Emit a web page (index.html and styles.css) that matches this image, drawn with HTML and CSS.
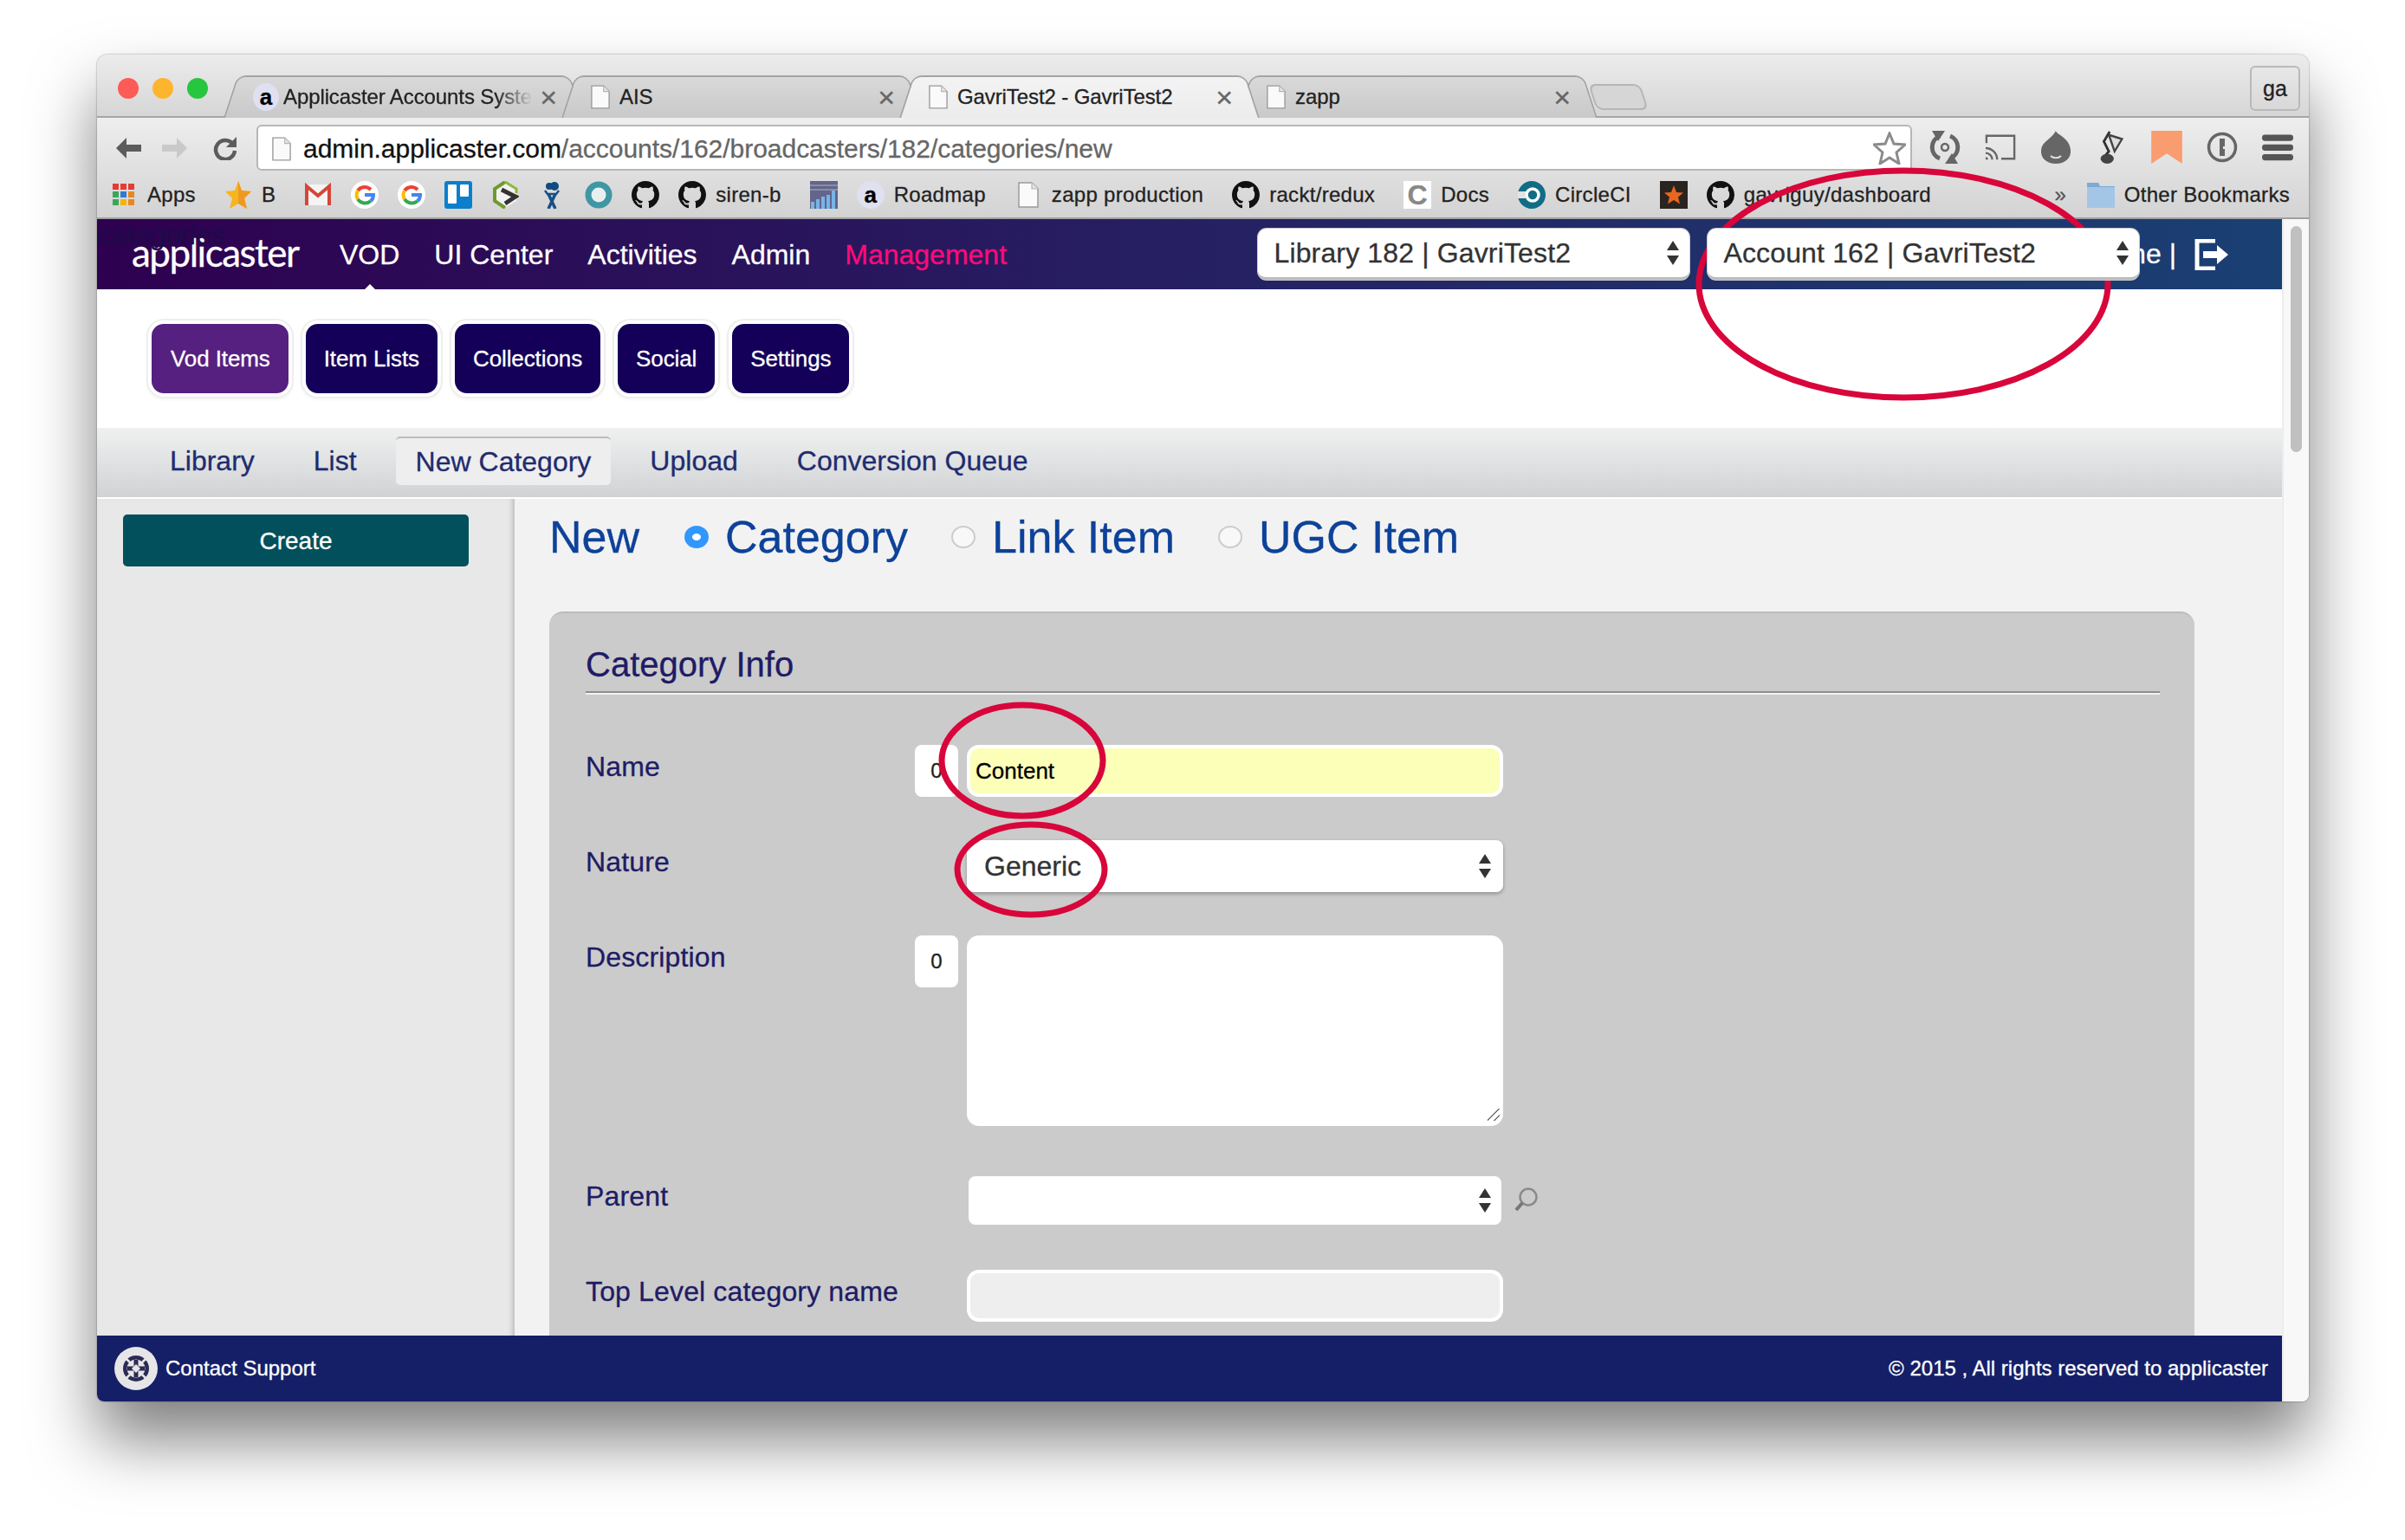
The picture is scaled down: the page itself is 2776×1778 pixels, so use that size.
FILE: index.html
```html
<!DOCTYPE html>
<html lang="en">
<head>
  <meta charset="UTF-8">
  <title>Applicaster Accounts System</title>
  <link rel="stylesheet" href="styles.css">
</head>
<body>
  <svg class="defs" width="0" height="0">
    <symbol id="gh" viewBox="0 0 16 16"><path d="M8 0C3.58 0 0 3.58 0 8c0 3.54 2.29 6.53 5.47 7.59.4.07.55-.17.55-.38 0-.19-.01-.82-.01-1.49-2.01.37-2.53-.49-2.69-.94-.09-.23-.48-.94-.82-1.13-.28-.15-.68-.52-.01-.53.63-.01 1.08.58 1.23.82.72 1.21 1.87.87 2.33.66.07-.52.28-.87.51-1.07-1.78-.2-3.64-.89-3.64-3.95 0-.87.31-1.59.82-2.15-.08-.2-.36-1.02.08-2.12 0 0 .67-.21 2.2.82.64-.18 1.32-.27 2-.27.68 0 1.36.09 2 .27 1.53-1.04 2.2-.82 2.2-.82.44 1.1.16 1.92.08 2.12.51.56.82 1.27.82 2.15 0 3.07-1.87 3.75-3.65 3.95.29.25.54.73.54 1.48 0 1.07-.01 1.93-.01 2.2 0 .21.15.46.55.38A8.013 8.013 0 0016 8c0-4.42-3.58-8-8-8z" fill="#111"/></symbol>
    <symbol id="doc" viewBox="0 0 24 30"><path d="M1 1h15l7 7v21H1z" fill="#fafafa" stroke="#9a9a9a" stroke-width="1.5"/><path d="M16 1v7h7" fill="#e4e4e4" stroke="#b5b5b5" stroke-width="1.2"/></symbol>
    <symbol id="goog" viewBox="0 0 32 32"><circle cx="16" cy="16" r="16" fill="#fff"/><path d="M23 10a10 10 0 0 0-15 1" fill="none" stroke="#ea4335" stroke-width="4"/><path d="M8 11a10 10 0 0 0 0 10" fill="none" stroke="#fbbc05" stroke-width="4"/><path d="M8 21a10 10 0 0 0 15 2" fill="none" stroke="#34a853" stroke-width="4"/><path d="M23 23a9 9 0 0 0 3-7H16" fill="none" stroke="#4285f4" stroke-width="4"/></symbol>
  </svg>

  <div class="window">
    <div class="tabstrip">
      <div class="lights"><i class="light red"></i><i class="light amber"></i><i class="light green"></i></div>
      <div class="tabs">
        <div class="tab"><span class="afav">a</span><span class="tab-title fade">Applicaster Accounts System</span><span class="tab-x">×</span></div>
        <div class="tab"><svg class="tab-doc"><use href="#doc"/></svg><span class="tab-title">AIS</span><span class="tab-x">×</span></div>
        <div class="tab active"><svg class="tab-doc"><use href="#doc"/></svg><span class="tab-title">GavriTest2 - GavriTest2</span><span class="tab-x">×</span></div>
        <div class="tab"><svg class="tab-doc"><use href="#doc"/></svg><span class="tab-title">zapp</span><span class="tab-x">×</span></div>
        <div class="newtab"></div>
      </div>
      <div class="profile">ga</div>
    </div>

    <div class="bars">
      <div class="toolbar">
        <svg class="nav-ico" viewBox="0 0 32 28"><path d="M14 2 2 14l12 12v-8h17v-8H14z" fill="#5c5c5c"/></svg>
        <svg class="nav-ico fwd" viewBox="0 0 32 28"><path d="M18 2l12 12-12 12v-8H1v-8h17z" fill="#c9c9c9"/></svg>
        <svg class="nav-ico rel" viewBox="0 0 28 28"><path d="M23 9.500A11 11 0 1 0 25 17" fill="none" stroke="#5c5c5c" stroke-width="4.500"/><path d="M27 1v12H15z" fill="#5c5c5c"/></svg>
        <div class="omnibox">
          <svg class="omni-doc"><use href="#doc"/></svg>
          <span class="url"><b>admin.applicaster.com</b>/accounts/162/broadcasters/182/categories/new</span>
          <svg class="omni-star" viewBox="0 0 38 38"><path d="M19 2l5 12 13 1-10 9 3 13-11-7-11 7 3-13L1 15l13-1z" fill="#fff" stroke="#8b8b8b" stroke-width="3"/></svg>
        </div>
        <div class="ext-icons">
          <svg viewBox="0 0 36 38"><path d="M12 6A14 14 0 0 0 12 32" fill="none" stroke="#666" stroke-width="5"/><path d="M24 32A14 14 0 0 0 24 6" fill="none" stroke="#666" stroke-width="5"/><circle cx="18" cy="19" r="4" fill="none" stroke="#666" stroke-width="2.500"/><path d="M3 0h15L10 12zM33 38H18l8-12z" fill="#666"/></svg>
          <svg viewBox="0 0 38 34"><path d="M2 12V3h34v28H20" fill="none" stroke="#666" stroke-width="2.500"/><path d="M1 18a14 14 0 0 1 14 14M1 24a8 8 0 0 1 8 8" fill="none" stroke="#666" stroke-width="2.500"/><path d="M1 29a3 3 0 0 1 3 3H1z" fill="#666"/></svg>
          <svg viewBox="0 0 36 38"><path d="M18 0c0 4 16 8 17 22 1 10-7 16-17 16S0 32 1 22C2 12 14 9 18 0z" fill="#666"/><path d="M12 29c3 3 9 3 12 0" fill="none" stroke="#e0e0e0" stroke-width="2"/></svg>
          <svg viewBox="0 0 30 40"><path d="M12 5l16 5-9 15z" fill="#ddd" stroke="#444" stroke-width="2.500"/><path d="M13 1 6 13l6 12-4 5" fill="none" stroke="#333" stroke-width="3"/><ellipse cx="10" cy="34" rx="8" ry="6" fill="#444"/></svg>
          <svg viewBox="0 0 30 32"><path d="M0 0h30v32L15 22 0 32z" fill="#f99c70"/></svg>
          <svg viewBox="0 0 36 36"><circle cx="18" cy="18" r="15.500" fill="none" stroke="#666" stroke-width="3.500"/><path d="M15 8h6v9h-2v3h2v8h-6z" fill="#666"/></svg>
          <svg viewBox="0 0 32 28"><rect y="1" width="32" height="6.500" rx="3" fill="#555"/><rect y="11" width="32" height="6.500" rx="3" fill="#555"/><rect y="21" width="32" height="6.500" rx="3" fill="#555"/></svg>
        </div>
      </div>

      <div class="bookmarks">
        <div class="bm"><span class="ico apps"><i class="r"></i><i class="r"></i><i class="r"></i><i class="g"></i><i class="b"></i><i class="o"></i><i class="g"></i><i class="y"></i><i class="o"></i></span><span class="bm-text">Apps</span></div>
        <div class="bm"><svg class="ico" viewBox="0 0 32 32"><path d="M16 0l4 11 11 1-8 8 3 12-10-6-10 6 3-12-8-8 11-1z" fill="#f7b51d"/><path d="M16 0l4 11 11 1-8 8 3 12-10-6z" fill="#ee9a20"/></svg><span class="bm-text">B</span></div>
        <svg class="ico" viewBox="0 0 32 32"><rect x="1" y="4" width="30" height="24" fill="#f4f4f4"/><path d="M3 28V6l13 11L29 6v22" fill="none" stroke="#d44638" stroke-width="4"/></svg>
        <svg class="ico"><use href="#goog"/></svg>
        <svg class="ico"><use href="#goog"/></svg>
        <svg class="ico" viewBox="0 0 32 32"><rect width="32" height="32" rx="3" fill="#0b7fcb"/><rect x="4" y="4" width="10" height="22" rx="1" fill="#fff"/><rect x="18" y="4" width="10" height="14" rx="1" fill="#fff"/></svg>
        <svg class="ico" viewBox="0 0 32 32"><path d="M16 1 29 9v14L16 31 4 23V9z" fill="#f2f2f2"/><path d="M16 1 4 9v14l12 8" fill="none" stroke="#6f9a2d" stroke-width="4"/><path d="M16 1l13 8v5" fill="none" stroke="#8ab83a" stroke-width="3"/><path d="M12 10l16 8-12 8" fill="none" stroke="#333" stroke-width="5"/></svg>
        <svg class="ico" viewBox="0 0 32 32"><circle cx="13" cy="6" r="4" fill="#0f4c81"/><circle cx="19" cy="6" r="5" fill="#0f4c81"/><path d="M8 11l3 4h10l3-4" fill="none" stroke="#174f86" stroke-width="2.500"/><path d="M12 15l8 17M20 15l-8 17" stroke="#174f86" stroke-width="3.500"/></svg>
        <svg class="ico" viewBox="0 0 32 32"><circle cx="16" cy="16" r="12" fill="#e8eff0" stroke="#3f97a3" stroke-width="7"/></svg>
        <svg class="ico"><use href="#gh"/></svg>
        <div class="bm"><svg class="ico"><use href="#gh"/></svg><span class="bm-text">siren-b</span></div>
        <svg class="ico" viewBox="0 0 32 32"><rect width="32" height="32" fill="#63658a"/><path d="M0 5h32M0 10h32" stroke="#8b8ca6" stroke-width="2"/><path d="M3 32v-8M9 32v-11M15 32v-14M21 32v-16M27 32V11" stroke="#76b5e8" stroke-width="4"/></svg>
        <div class="bm"><span class="afav">a</span><span class="bm-text">Roadmap</span></div>
        <div class="bm"><svg class="ico bm-doc"><use href="#doc"/></svg><span class="bm-text">zapp production</span></div>
        <div class="bm"><svg class="ico"><use href="#gh"/></svg><span class="bm-text">rackt/redux</span></div>
        <div class="bm"><span class="ico cdocs">C</span><span class="bm-text">Docs</span></div>
        <div class="bm"><svg class="ico" viewBox="0 0 32 32"><circle cx="16" cy="16" r="16" fill="#116d86"/><circle cx="17" cy="16" r="7" fill="none" stroke="#fff" stroke-width="3.500"/><path d="M0 12h9v8H0z" fill="#e3e3e3"/><circle cx="17" cy="16" r="2.500" fill="#116d86"/></svg><span class="bm-text">CircleCI</span></div>
        <svg class="ico" viewBox="0 0 32 32"><rect width="32" height="32" fill="#2a2420"/><path d="M16 5l3 8 8 .5-6 5 2 8-7-4.500L9 26.500l2-8-6-5 8-.5z" fill="#e8671f"/></svg>
        <div class="bm"><svg class="ico"><use href="#gh"/></svg><span class="bm-text">gavriguy/dashboard</span></div>
        <span class="chevrons">»</span>
        <div class="bm other"><svg class="ico" viewBox="0 0 32 32"><path d="M0 6V2h13l2 4h17v25H0z" fill="#7da9d2"/><path d="M0 7h32v24H0z" fill="#a4c6e6"/></svg><span class="bm-text">Other Bookmarks</span></div>
      </div>
    </div>

    <div class="viewport">
      <div class="page">
        <header class="appbar">
          <span class="ghost-title">categories</span>
          <span class="logo">applicaster</span>
          <nav class="appnav">
            <a class="current">VOD</a>
            <a>UI Center</a>
            <a>Activities</a>
            <a>Admin</a>
            <a class="pink">Management</a>
          </nav>
          <div class="appbar-right">
            <div class="topselect"><span>Library 182 | GavriTest2</span><span class="updown"></span></div>
            <div class="topselect"><span>Account 162 | GavriTest2</span><span class="updown"></span></div>
            <span class="home">Home |</span>
            <svg class="logout" viewBox="0 0 40 36"><path d="M24 2H3v32h21" fill="none" stroke="#fff" stroke-width="5"/><path d="M10 14h16V7l13 11-13 11v-7H10z" fill="#fff"/></svg>
          </div>
        </header>

        <div class="sections">
          <a class="section on">Vod Items</a>
          <a class="section">Item Lists</a>
          <a class="section">Collections</a>
          <a class="section">Social</a>
          <a class="section">Settings</a>
        </div>

        <div class="subnav">
          <a>Library</a>
          <a>List</a>
          <a class="on">New Category</a>
          <a>Upload</a>
          <a>Conversion Queue</a>
        </div>

        <div class="main">
          <aside class="sidebar"><button class="create">Create</button></aside>
          <section class="content">
            <div class="kinds">
              <span class="kind-new">New</span>
              <span class="kind"><i class="radio checked"></i>Category</span>
              <span class="kind"><i class="radio"></i>Link Item</span>
              <span class="kind"><i class="radio"></i>UGC Item</span>
            </div>
            <div class="panel">
              <h2 class="panel-title">Category Info</h2>
              <div class="row row-name">
                <label>Name</label>
                <span class="counter">0</span>
                <input class="field field-filled" value="Content">
              </div>
              <div class="row row-nature">
                <label>Nature</label>
                <div class="select shadowed"><span>Generic</span><span class="updown"></span></div>
              </div>
              <div class="row row-desc">
                <label>Description</label>
                <span class="counter">0</span>
                <textarea class="field area"></textarea>
              </div>
              <div class="row row-parent">
                <label>Parent</label>
                <div class="select narrow"><span></span><span class="updown"></span></div>
                <svg class="search" viewBox="0 0 28 30"><circle cx="16" cy="12" r="9.500" fill="none" stroke="#8a8a8a" stroke-width="2.500"/><path d="M9 19l-7 8" stroke="#777" stroke-width="4"/></svg>
              </div>
              <div class="row">
                <label>Top Level category name</label>
                <input class="field locked" disabled>
              </div>
            </div>
          </section>
        </div>

        <footer class="footer">
          <div class="support">
            <svg class="support-ico" viewBox="0 0 50 50"><ellipse cx="25" cy="25" rx="25" ry="25" fill="#e6e6e6"/><circle cx="25" cy="25" r="15" fill="#2b2b55"/><circle cx="25" cy="25" r="10.500" fill="#e6e6e6"/><path d="M25 15v20M15 25h20" stroke="#2b2b55" stroke-width="5"/><path d="M14 14l7 7M36 14l-7 7M14 36l7-7M36 36l-7-7" stroke="#e6e6e6" stroke-width="2.500"/><path d="M25 20l5 5-5 5-5-5z" fill="#e6e6e6"/></svg>
            Contact Support
          </div>
          <span>© 2015 , All rights reserved to applicaster</span>
        </footer>
      </div>
      <div class="scrollbar"><i class="thumb"></i></div>
    </div>
  </div>

  <svg class="marks" viewBox="0 0 2776 1778">
    <ellipse cx="2197" cy="328" rx="236" ry="131"/>
    <ellipse cx="1180" cy="878" rx="93" ry="64"/>
    <ellipse cx="1190" cy="1004" rx="85" ry="52"/>
  </svg>
</body>
</html>
```

FILE: styles.css
```css
* { box-sizing: border-box; }

html, body { margin: 0; }

body {
  position: relative;
  width: 2776px;
  height: 1778px;
  padding: 63px 0 0 112px;
  background: #fff;
  font-family: "Liberation Sans", Arial, sans-serif;
  -webkit-text-stroke: .3px;
  overflow: hidden;
}

.defs { position: absolute; }

.window {
  display: flex;
  flex-direction: column;
  width: 2553px;
  height: 1555px;
  border-radius: 12px 12px 8px 8px;
  overflow: hidden;
  background: #f8f8f8;
  box-shadow: 0 44px 74px rgba(0, 0, 0, .5), 0 0 2px rgba(0, 0, 0, .5);
}

/* browser tabs */
.tabstrip {
  display: flex;
  align-items: flex-end;
  height: 73px;
  background: linear-gradient(#ececec, #d6d6d6);
  border-bottom: 2px solid #a6a6a6;
}

.lights {
  display: flex;
  gap: 16px;
  align-self: flex-start;
  margin: 27px 18px 0 24px;
}

.light { width: 24px; height: 24px; border-radius: 50%; }
.red { background: #fc5b57; }
.amber { background: #fdb52d; }
.green { background: #27c63f; }

.tabs { display: flex; align-items: flex-end; height: 49px; margin-bottom: -2px; }

.tab {
  position: relative;
  display: flex;
  align-items: center;
  width: 415px;
  height: 49px;
  margin-right: -25px;
  padding: 0 30px 0 34px;
  font-size: 24px;
  letter-spacing: -.1px;
  color: #222;
  z-index: 1;
}

.tab::before, .tab::after {
  content: "";
  position: absolute;
  top: 0;
  bottom: 0;
  width: 50%;
  background: linear-gradient(#d9d9d9, #c9c9c9);
  border: 2px solid #a4a4a4;
  border-bottom: 0;
  z-index: -1;
}

.tab::before {
  left: 0;
  border-right: 0;
  border-radius: 10px 0 0 0;
  transform-origin: bottom left;
  transform: skewX(-18deg);
}

.tab::after {
  right: 0;
  border-left: 0;
  border-radius: 0 10px 0 0;
  transform-origin: bottom right;
  transform: skewX(18deg);
}

.tab.active { z-index: 2; }
.tab.active::before, .tab.active::after { background: linear-gradient(#f3f3f3, #ececec); }

.tab-doc { width: 22px; height: 28px; margin-right: 11px; flex: none; }

.tab-title { flex: 1; white-space: nowrap; overflow: hidden; }

.fade {
  -webkit-mask-image: linear-gradient(to right, #000 85%, transparent);
  mask-image: linear-gradient(to right, #000 85%, transparent);
}

.tab-x { font-size: 34px; line-height: 1; color: #666; margin-left: 8px; }

.afav {
  display: inline-flex;
  align-items: center;
  justify-content: center;
  flex: none;
  width: 30px;
  height: 32px;
  margin-right: 5px;
  border-radius: 50%;
  background: #dfe0f0;
  color: #000;
  font-weight: bold;
  font-size: 26px;
  line-height: 1;
}

.newtab {
  width: 60px;
  height: 30px;
  margin: 0 0 9px 20px;
  border: 2px solid #b5b5b5;
  border-radius: 8px;
  background: #d6d6d6;
  transform: skewX(18deg);
}

.profile {
  display: flex;
  align-items: center;
  justify-content: center;
  align-self: flex-start;
  width: 58px;
  height: 52px;
  margin: 13px 10px 0 auto;
  border: 2px solid #b9b9b9;
  border-radius: 6px;
  font-size: 25px;
  color: #222;
}

/* toolbar and bookmarks */
.bars { background: linear-gradient(#eeeeee, #d3d3d3); border-bottom: 2px solid #a0a0a0; }

.toolbar { display: flex; align-items: flex-end; height: 61px; padding-left: 20px; }

.nav-ico { width: 32px; height: 28px; margin: 0 22px 12px 0; flex: none; }
.nav-ico.fwd { margin-right: 28px; }
.nav-ico.rel { width: 28px; margin-right: 22px; }

.omnibox {
  display: flex;
  align-items: center;
  width: 1911px;
  height: 53px;
  padding: 3px 5px 0 16px;
  background: #fff;
  border: 2px solid #b7b7b7;
  border-radius: 6px 6px 0 6px;
}

.omni-doc { width: 22px; height: 28px; margin-right: 14px; flex: none; }

.url { flex: 1; font-size: 30px; letter-spacing: -.03px; color: #666; white-space: nowrap; }
.url b { font-weight: normal; color: #111; }

.omni-star { width: 38px; height: 38px; flex: none; margin-top: -3px; }

.ext-icons { display: flex; gap: 28px; align-self: flex-start; margin: 15px 0 0 20px; }
.ext-icons svg { width: 36px; height: 38px; }

.bookmarks {
  display: flex;
  align-items: center;
  gap: 22px;
  height: 54px;
  padding: 2px 0 0 15px;
}

.ico { width: 32px; height: 32px; flex: none; }

.bm { display: flex; align-items: center; gap: 11px; }
.bm .afav { margin: 0; width: 32px; }
.bm-doc { padding: 0 4px; }

.bm-text { font-size: 24px; color: #222; margin-right: 11px; white-space: nowrap; letter-spacing: .3px; }

.apps {
  display: grid;
  grid-template-columns: repeat(3, 7px);
  grid-auto-rows: 7px;
  gap: 2px;
  padding: 3px 0 0 3px;
}

.apps i.r { background: #e53b30; }
.apps i.g { background: #3aa757; }
.apps i.b { background: #3478d0; }
.apps i.o { background: #e8891c; }
.apps i.y { background: #f4b400; }

.cdocs {
  display: flex;
  align-items: center;
  justify-content: center;
  background: #fff;
  color: #888;
  font-weight: bold;
  font-size: 32px;
}

.chevrons { margin-left: auto; font-size: 24px; color: #555; }

.other { margin: 0 22px 0 2px; }
.other .bm-text { margin-right: 0; }

/* page */
.viewport { display: flex; flex: 1; min-height: 0; }

.page { display: flex; flex-direction: column; width: 2522px; }

.appbar {
  position: relative;
  display: flex;
  align-items: center;
  flex: none;
  height: 81px;
  padding: 0 61px 0 40px;
  background: linear-gradient(to right, #2e0050, #262063 50%, #1a4073);
  color: #fff;
}

.ghost-title { position: absolute; left: 0; top: 0; font-size: 32px; color: #1f0a4a; }

.logo { width: 240px; font-family: Lato, sans-serif; font-size: 44px; letter-spacing: -1.500px; margin-bottom: 6px; }

.appnav { display: flex; gap: 40px; padding-top: 2px; font-size: 32px; }

.appnav .current { position: relative; }

.appnav .current::after {
  content: "";
  position: absolute;
  left: 50%;
  bottom: -22px;
  margin-left: -7px;
  border: 7px solid transparent;
  border-top: 0;
  border-bottom-color: #fff;
}

.appnav .pink { color: #ff0a78; }

.appbar-right { display: flex; align-items: center; margin-left: auto; }

.topselect {
  position: relative;
  z-index: 1;
  display: flex;
  align-items: center;
  justify-content: space-between;
  width: 498px;
  height: 59px;
  margin-right: 21px;
  padding: 0 12px 0 18px;
  background: #fff;
  border-bottom: 3px solid #bbb;
  border-radius: 10px;
  box-shadow: 0 0 0 1px #ccc;
  font-size: 32px;
  letter-spacing: .15px;
  color: #333;
}

.updown { position: relative; width: 14px; height: 28px; flex: none; }

.updown::before, .updown::after {
  content: "";
  position: absolute;
  left: 0;
  border: 7px solid transparent;
}

.updown::before { top: 0; border-top: 0; border-bottom: 11px solid #333; }
.updown::after { bottom: 0; border-bottom: 0; border-top: 11px solid #333; }

.home { margin: 0 21px 0 -81px; font-size: 32px; white-space: nowrap; }

.logout { width: 40px; height: 36px; flex: none; }

.sections { display: flex; flex: none; gap: 20px; height: 160px; padding: 40px 0 0 63px; background: #fff; }

.section {
  display: flex;
  align-items: center;
  height: 80px;
  padding: 0 21px;
  background: #140058;
  border-radius: 14px;
  box-shadow: 0 0 0 4px #fff, 0 0 0 6px #eee, 0 2px 4px 5px rgba(0, 0, 0, .06);
  color: #fff;
  font-size: 26px;
  letter-spacing: -.1px;
}

.section.on { background: #55207f; padding: 0 21px 0 22px; }

.subnav {
  display: flex;
  align-items: flex-end;
  gap: 22px;
  flex: none;
  height: 82px;
  padding: 0 0 14px 61px;
  border-bottom: 2px solid #fff;
  background: linear-gradient(#eff1f1, #d0d2d4);
  font-size: 32px;
  color: #1f2c6e;
}

.subnav a { display: flex; align-items: center; height: 56px; padding: 0 23px; }
.subnav a.on { background: #eee; border-top: 2px solid #bbb; border-radius: 5px; }

.main { display: flex; flex: 1; min-height: 0; overflow: hidden; }

.sidebar {
  width: 482px;
  flex: none;
  padding: 18px 0 0 30px;
  background: #e8e8e8;
  box-shadow: inset -6px 0 6px -4px rgba(0, 0, 0, .22);
}

.create {
  display: block;
  width: 399px;
  height: 60px;
  padding: 2px 0 0;
  border: 0;
  border-radius: 5px;
  background: #02505b;
  color: #fff;
  font: 28px "Liberation Sans", Arial, sans-serif;
  -webkit-text-stroke: .3px;
}

.content { flex: 1; padding: 0 101px 0 40px; background: #f2f2f2; }

.kinds {
  display: flex;
  align-items: center;
  height: 88px;
  margin-bottom: 42px;
  font-size: 52px;
  color: #0d4299;
}

.kind-new { margin-right: 52px; }

.kind { display: flex; align-items: center; margin-right: 50px; }

.radio {
  width: 28px;
  height: 26px;
  margin-right: 19px;
  border: 2px solid #ccc;
  border-radius: 50%;
  background: #f8f8f8;
}

.radio.checked { border: 9px solid #3297fd; background: #fff; }

.panel {
  height: 900px;
  padding: 34px 40px 0 42px;
  background: #cbcbcb;
  border-radius: 16px;
  border-top: 2px solid #bbb;
  color: #201b65;
}

.panel-title {
  margin: 0 0 60px;
  padding-bottom: 6px;
  border-bottom: 2px solid #8f8f8f;
  box-shadow: 0 2px 0 #f2f2f2;
  font-size: 40px;
  font-weight: normal;
  line-height: 50px;
}

.row { display: flex; align-items: flex-start; }
.row-name, .row-nature { margin-bottom: 50px; }
.row-desc { margin-bottom: 58px; }
.row-parent { margin-bottom: 52px; }

.row label { width: 380px; flex: none; font-size: 32px; letter-spacing: .15px; line-height: 50px; white-space: nowrap; }
.row-parent label { line-height: 46px; }

.counter {
  display: flex;
  align-items: center;
  justify-content: center;
  width: 50px;
  height: 60px;
  margin-right: 10px;
  background: #fff;
  border-radius: 8px;
  font-size: 24px;
  color: #222;
}

.field {
  display: block;
  width: 619px;
  height: 60px;
  padding: 0 6px;
  border: 4px solid #fff;
  border-radius: 14px;
  outline: 0;
  font: 26px "Liberation Sans", Arial, sans-serif;
  -webkit-text-stroke: .3px;
  color: #000;
}

.field-filled { background: #fbffb8; }

/* the two slanted strokes of the resize grip */
.area {
  height: 220px;
  border: 0;
  resize: none;
  background: linear-gradient(135deg, transparent 44%, #777 44%, #777 52%, transparent 52%, transparent 72%, #777 72%, #777 80%, transparent 80%) no-repeat right 4px bottom 6px / 14px 14px, #fff;
}

.locked { background: #eee; margin-left: 60px; }

.select {
  display: flex;
  align-items: center;
  justify-content: space-between;
  width: 619px;
  height: 60px;
  margin-left: 60px;
  padding: 0 14px 0 20px;
  background: #fff;
  border-radius: 8px;
  font-size: 32px;
  color: #333;
}

.shadowed { box-shadow: 0 2px 4px rgba(0, 0, 0, .3); }

.narrow { width: 615px; height: 56px; margin-left: 62px; padding-right: 12px; }

.search { width: 28px; height: 30px; margin: 12px 0 0 15px; }

.footer {
  display: flex;
  align-items: center;
  justify-content: space-between;
  flex: none;
  height: 76px;
  padding: 0 16px 0 20px;
  background: #151f68;
  color: #fff;
  font-size: 24px;
  position: relative;
}

.support { display: flex; align-items: center; gap: 9px; }

.support-ico { width: 50px; height: 50px; }

.scrollbar { flex: 1; padding: 8px 8px 0; border-left: 2px solid #ececec; background: #f8f8f8; }

.thumb { display: block; height: 261px; border-radius: 8px; background: #c0c0c0; }

/* red rings drawn over the screenshot */
.marks { position: absolute; left: 0; top: 0; width: 2776px; height: 1778px; pointer-events: none; }

.marks ellipse { fill: none; stroke: #d8063a; stroke-width: 7; }
```
